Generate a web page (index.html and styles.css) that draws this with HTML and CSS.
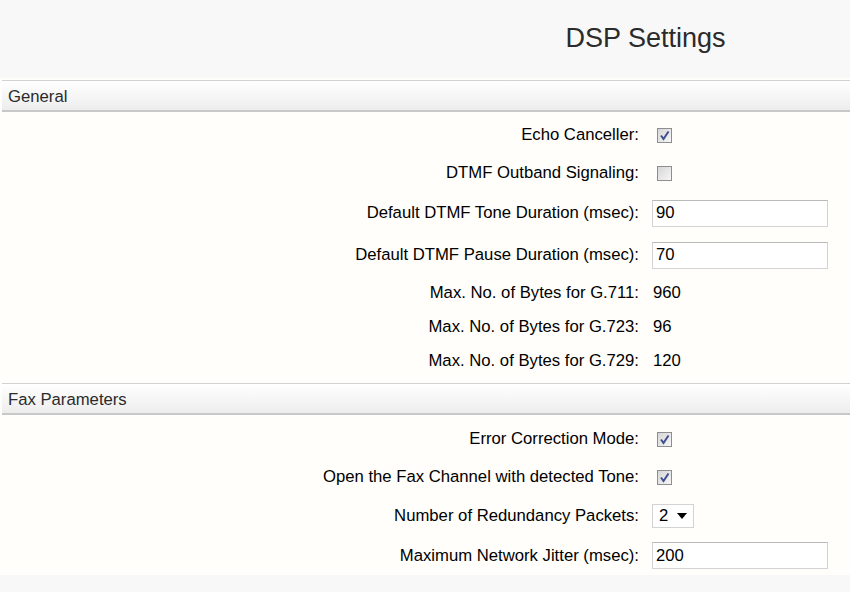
FILE: index.html
```html
<!DOCTYPE html>
<html>
  <head>
    <title>DSP Settings</title>
    <link rel="stylesheet" href="styles.css">
  </head>
  <body>
    <div class="page-head">
      <h1>DSP Settings</h1>
    </div>

    <div class="content">
      <!-- General -->
      <div class="section-title">General</div>
      <div class="rows">
        <div class="row row-check">
          <span class="label">Echo Canceller:</span>
          <span class="field">
            <span class="check">
              <svg viewBox="0 0 13 13" width="13" height="13"><path d="M3 6.5 L5.5 10 L10.5 2.5" fill="none" stroke="#3f4f8f" stroke-width="2"/></svg>
            </span>
          </span>
        </div>
        <div class="row row-check">
          <span class="label">DTMF Outband Signaling:</span>
          <span class="field"><span class="check"></span></span>
        </div>
        <div class="row row-input">
          <span class="label">Default DTMF Tone Duration (msec):</span>
          <span class="field"><input class="text-input" type="text" value="90"></span>
        </div>
        <div class="row row-input">
          <span class="label">Default DTMF Pause Duration (msec):</span>
          <span class="field"><input class="text-input" type="text" value="70"></span>
        </div>
        <div class="row row-text">
          <span class="label">Max. No. of Bytes for G.711:</span>
          <span class="field value">960</span>
        </div>
        <div class="row row-text">
          <span class="label">Max. No. of Bytes for G.723:</span>
          <span class="field value">96</span>
        </div>
        <div class="row row-text">
          <span class="label">Max. No. of Bytes for G.729:</span>
          <span class="field value">120</span>
        </div>
      </div>

      <!-- Fax Parameters -->
      <div class="section-title">Fax Parameters</div>
      <div class="rows rows-last">
        <div class="row row-check">
          <span class="label">Error Correction Mode:</span>
          <span class="field">
            <span class="check">
              <svg viewBox="0 0 13 13" width="13" height="13"><path d="M3 6.5 L5.5 10 L10.5 2.5" fill="none" stroke="#3f4f8f" stroke-width="2"/></svg>
            </span>
          </span>
        </div>
        <div class="row row-check">
          <span class="label">Open the Fax Channel with detected Tone:</span>
          <span class="field">
            <span class="check">
              <svg viewBox="0 0 13 13" width="13" height="13"><path d="M3 6.5 L5.5 10 L10.5 2.5" fill="none" stroke="#3f4f8f" stroke-width="2"/></svg>
            </span>
          </span>
        </div>
        <div class="row row-select">
          <span class="label">Number of Redundancy Packets:</span>
          <span class="field">
            <span class="select">
              <span>2</span>
              <svg viewBox="0 0 10 6" width="10" height="6"><path d="M0 0 L10 0 L5 6 Z" fill="#000"/></svg>
            </span>
          </span>
        </div>
        <div class="row row-input">
          <span class="label">Maximum Network Jitter (msec):</span>
          <span class="field"><input class="text-input" type="text" value="200"></span>
        </div>
      </div>
    </div>
  </body>
</html>
```

FILE: styles.css
```css
body {
  margin: 0;
  background-color: #f8f8f8;
  font-family: "Liberation Sans", Arial, sans-serif;
  font-size: 16.7px;
  color: #111;
}
.page-head {
  height: 78px;
  box-sizing: border-box;
  padding-top: 23px;
  padding-left: 441px;
  text-align: center;
}
.page-head h1 {
  margin: 0;
  font-size: 27px;
  line-height: 30px;
  font-weight: normal;
  color: #2b2b2b;
}
.content {
  background-color: #fffefa;
  padding-top: 2px;
}
.section-title {
  margin-left: 2px;
  height: 29px;
  line-height: 31px;
  padding-left: 6px;
  border-top: 1px solid #d2d2d2;
  border-bottom: 2px solid #c8c8c8;
  background: linear-gradient(#ffffff, #ededed);
  color: #2b2b2b;
}
.rows {
  padding-top: 4px;
  padding-bottom: 5px;
}
.rows-last {
  padding-top: 5px;
  padding-bottom: 0;
}
.row {
  display: flex;
  align-items: center;
}
.row-check {
  height: 38px;
}
.row-input {
  height: 42px;
}
.row-text {
  height: 34px;
}
.row-select {
  height: 40px;
}
.rows-last .row-input {
  height: 39px;
}
.label {
  width: 639px;
  text-align: right;
  color: #000;
}
.field {
  padding-left: 13px;
  display: flex;
  align-items: center;
}
.value {
  padding-left: 14px;
  color: #000;
}
.check {
  box-sizing: border-box;
  width: 15px;
  height: 15px;
  margin-left: 5px;
  border: 1px solid #8e8e8e;
  background: linear-gradient(135deg, #d6d6d6, #f6f6f6);
  display: flex;
  align-items: center;
  justify-content: center;
}
.text-input {
  box-sizing: border-box;
  width: 176px;
  height: 27px;
  margin: 0;
  padding: 0 3px;
  border: 1px solid #d3d3d3;
  border-top-color: #b9b9b9;
  background-color: #fff;
  font-family: "Liberation Sans", Arial, sans-serif;
  font-size: 16.7px;
  color: #000;
}
.select {
  box-sizing: border-box;
  width: 42px;
  height: 24px;
  padding: 0 6px 0 6px;
  border: 1px solid #d3d3d3;
  background-color: #fff;
  display: flex;
  align-items: center;
  justify-content: space-between;
  color: #000;
}
```
